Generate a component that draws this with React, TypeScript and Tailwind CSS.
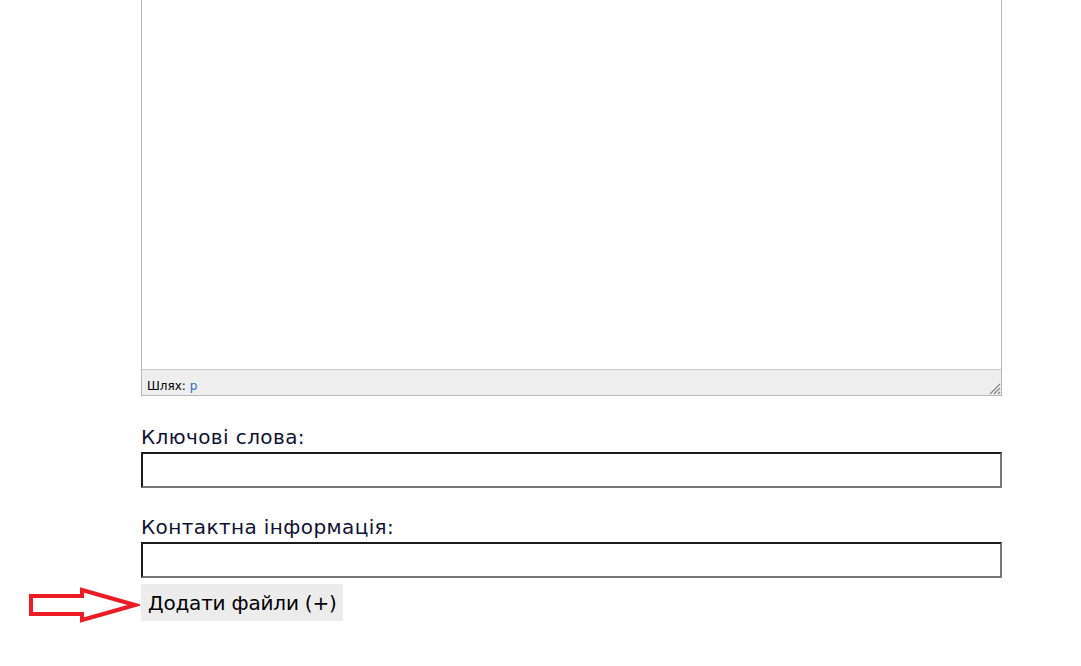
export default function App() {
  return (
    <div className="w-[1081px] h-[666px] bg-white overflow-hidden relative font-['DejaVu_Sans',sans-serif]">
      <div className="ml-[141px] w-[861px]">
        {/* Editor */}
        <div className="h-[396px] border-x border-b border-[#b8b8b8] flex flex-col">
          <div className="flex-1" />
          <div className="h-[26px] border-t border-[#c8c8c8] bg-[#eeeeee] flex items-end justify-between pl-[5px] pb-[2px] text-[12px] leading-[14px]">
            <span className="text-black">
              Шлях: <span className="text-[#2a6fb0]">p</span>
            </span>
            <svg width="14" height="14" viewBox="0 0 14 14" className="mb-[-2px]">
              <path d="M13 3 L3 13 M13 7 L7 13 M13 11 L11 13" stroke="#8a8a8a" strokeWidth="1.3" />
            </svg>
          </div>
        </div>

        {/* Fields */}
        <div className="mt-[29px] text-[20px] leading-[24px] tracking-[0.4px] text-[#111133]">Ключові слова:</div>
        <input
          type="text"
          className="mt-[3px] block w-[861px] h-[36px] border-2 border-t-[#1c1c1c] border-l-[#1c1c1c] border-r-[#767676] border-b-[#767676] bg-white outline-none"
        />

        <div className="mt-[27px] text-[20px] leading-[24px] tracking-[0.4px] text-[#111133]">Контактна інформація:</div>
        <input
          type="text"
          className="mt-[3px] block w-[861px] h-[36px] border-2 border-t-[#1c1c1c] border-l-[#1c1c1c] border-r-[#767676] border-b-[#767676] bg-white outline-none"
        />

        <div className="mt-[6px] flex items-center">
          <button className="h-[37px] w-[202px] bg-[#ececec] text-[20px] leading-[24px] tracking-[-0.2px] text-black text-left pl-[7px] font-['DejaVu_Sans',sans-serif]">
            Додати файли (+)
          </button>
        </div>
      </div>

      {/* Red arrow */}
      <svg className="absolute left-[28px] top-[587px]" width="112" height="36" viewBox="0 0 112 36">
        <path
          d="M3 9 L54 9 L54 3 L107 18 L54 33 L54 27 L3 27 Z"
          fill="none"
          stroke="#ec1c24"
          strokeWidth="4"
          strokeLinejoin="miter"
        />
      </svg>
    </div>
  );
}
